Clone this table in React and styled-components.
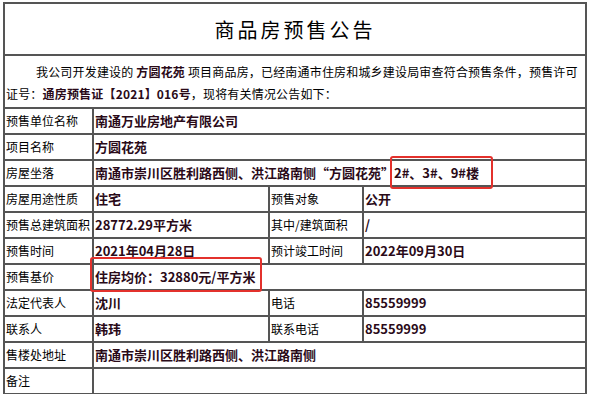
import React from "react";
import styled, { createGlobalStyle } from "styled-components";

const GlobalStyle = createGlobalStyle`
  body {
    margin: 0;
    background: #fff;
    font-family: "Noto Sans CJK SC", "Noto Sans", sans-serif;
  }
`;

const Page = styled.div`
  padding: 2px 4px 0 3px;
`;

const Table = styled.table`
  width: 584px;
  table-layout: fixed;
  border-collapse: collapse;
  border: 2px solid #4a4a4a;
`;

const Cell = styled.td`
  border: 2px solid #555;
  padding: 0 1px;
  height: ${(p) => p.h || 24}px;
  font-size: 12px;
  line-height: 16px;
  color: #000;
  vertical-align: middle;
  white-space: nowrap;
`;

const TitleCell = styled(Cell)`
  text-align: center;
  font-size: 20px;
  letter-spacing: 3px;
  line-height: 24px;
  padding-top: 2px;
`;

const IntroCell = styled(Cell)`
  white-space: normal;
  line-height: 22px;
  letter-spacing: 0.18px;
  text-indent: 30px;
  padding-top: 2px;
`;

const Value = styled(Cell)`
  font-size: 13px;
  font-weight: 700;
  color: #2a0a18;
`;

const Strong = styled.b`
  color: #2a0a18;
`;

const Mark = styled.span`
  position: relative;
  &::after {
    content: "";
    position: absolute;
    left: ${(p) => p.l}px;
    right: ${(p) => p.r}px;
    top: ${(p) => p.t}px;
    bottom: ${(p) => p.b}px;
    border: 2px solid #e3312c;
    border-radius: 3px;
  }
`;

const rows = [
  { label: "预售单位名称", value: "南通万业房地产有限公司" },
  { label: "项目名称", value: "方圆花苑" },
  {
    label: "房屋坐落",
    value: (
      <>
        南通市崇川区胜利路西侧、洪江路南侧“方圆花苑”
        <Mark l={-4} r={-14} t={-7} b={-7}>2#、3#、9#楼</Mark>
      </>
    ),
  },
  { label: "房屋用途性质", value: "住宅", label2: "预售对象", value2: "公开" },
  { label: "预售总建筑面积", value: "28772.29平方米", label2: "其中/建筑面积", value2: "/" },
  { label: "预售时间", value: "2021年04月28日", label2: "预计竣工时间", value2: "2022年09月30日" },
  {
    label: "预售基价",
    value: <Mark l={-5} r={-7} t={-10} b={-6}>住房均价：32880元/平方米</Mark>,
  },
  { label: "法定代表人", value: "沈川", label2: "电话", value2: "85559999" },
  { label: "联系人", value: "韩玮", label2: "联系电话", value2: "85559999" },
  { label: "售楼处地址", value: "南通市崇川区胜利路西侧、洪江路南侧" },
  { label: "备注", value: "" },
];

export default function App() {
  return (
    <Page>
      <GlobalStyle />
      <Table>
        <colgroup>
          <col style={{ width: 89 }} />
          <col style={{ width: 176 }} />
          <col style={{ width: 94 }} />
          <col style={{ width: 223 }} />
        </colgroup>
        <tbody>
          <tr>
            <TitleCell colSpan={4} h={48}>商品房预售公告</TitleCell>
          </tr>
          <tr>
            <IntroCell colSpan={4} h={49}>
              我公司开发建设的 <Strong>方圆花苑</Strong> 项目商品房，已经南通市住房和城乡建设局审查符合预售条件，预售许可证号：
              <Strong>通房预售证【2021】016号</Strong>，现将有关情况公告如下：
            </IntroCell>
          </tr>
          {rows.map((r) => (
            <tr key={r.label}>
              <Cell>{r.label}</Cell>
              {r.label2 ? (
                <>
                  <Value>{r.value}</Value>
                  <Cell>{r.label2}</Cell>
                  <Value>{r.value2}</Value>
                </>
              ) : (
                <Value colSpan={3}>{r.value}</Value>
              )}
            </tr>
          ))}
        </tbody>
      </Table>
    </Page>
  );
}
